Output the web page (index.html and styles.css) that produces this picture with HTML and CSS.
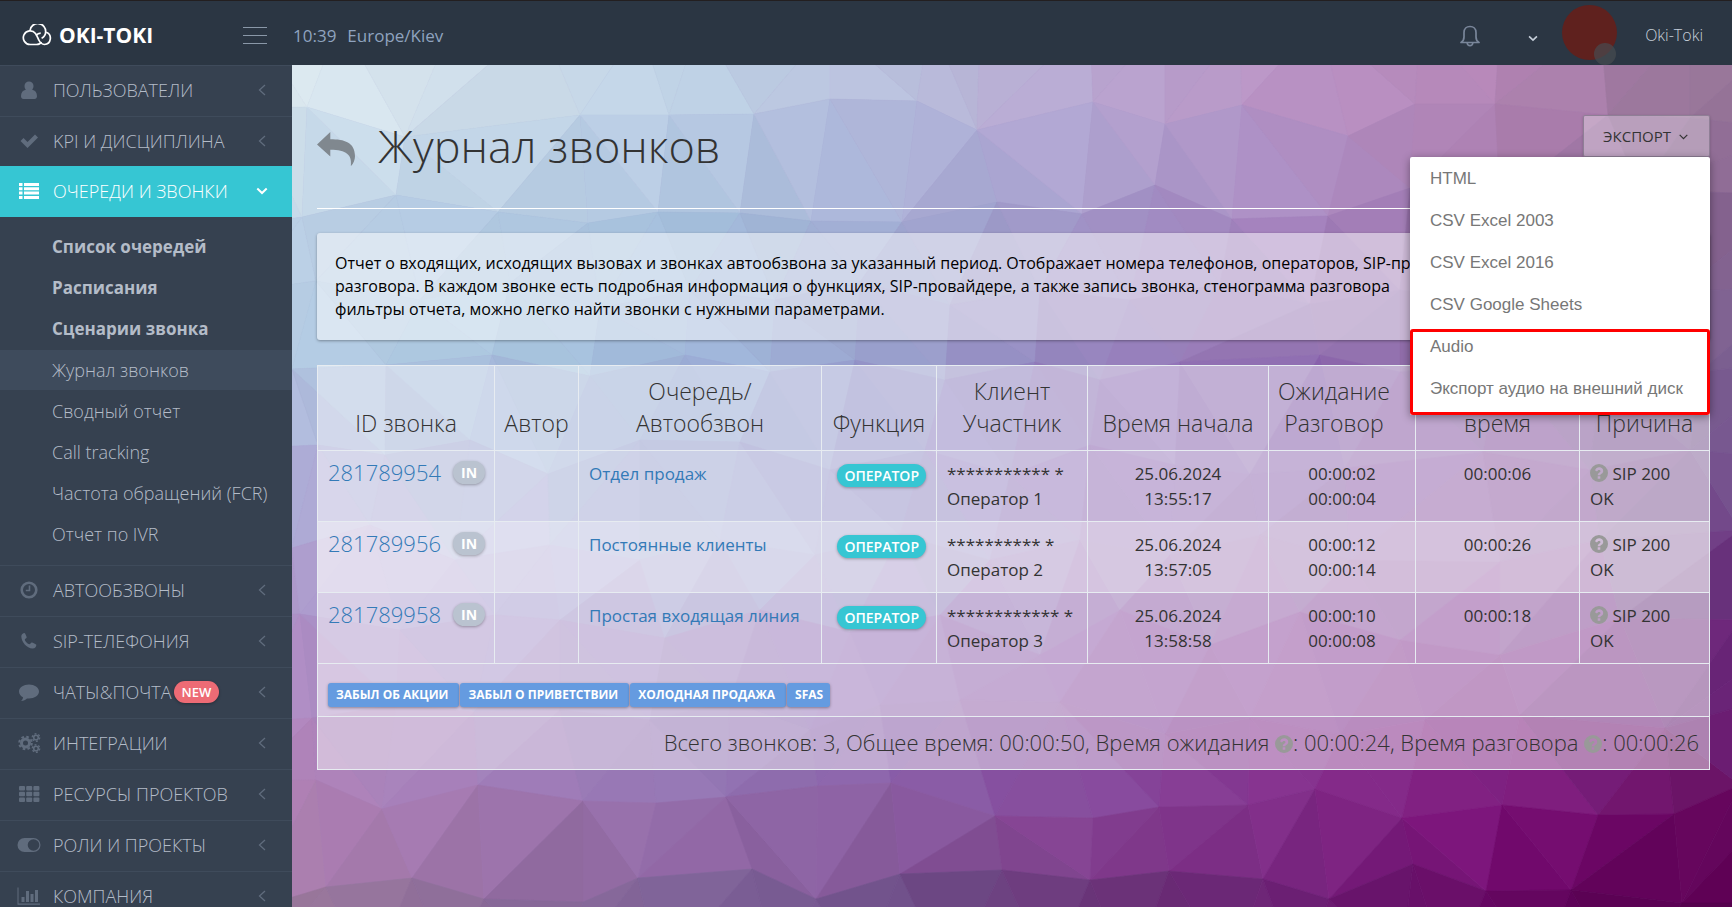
FILE: index.html
```html
<!DOCTYPE html>
<html lang="ru">
<head>
<meta charset="utf-8">
<title>Журнал звонков</title>
<link rel="stylesheet" href="styles.css">
</head>
<body>
<svg class="defs" aria-hidden="true">
  <symbol id="chev-left" viewBox="0 0 8 12"><path d="M7 1 1.500 6 7 11" fill="none" stroke="currentColor" stroke-width="1.300"/></symbol>
  <symbol id="chev-down" viewBox="0 0 12 8"><path d="M1.300 1.500 6 6 10.700 1.500" fill="none" stroke="currentColor" stroke-width="2"/></symbol>
  <symbol id="question" viewBox="0 0 18 18"><path fill-rule="evenodd" fill="currentColor" d="M9 0a9 9 0 1 1 0 18A9 9 0 0 1 9 0ZM7.700 12.300v2.500h2.600v-2.500ZM5 6.300l2 1.200C7.500 6.500 8 5.900 9 5.900c.9 0 1.500.5 1.500 1.200 0 .8-.5 1.100-1.300 1.600-.9.500-1.500 1.200-1.500 2.500h2.500c0-.6.400-.9 1.200-1.400 1-.6 1.800-1.500 1.800-2.900C13.200 4.600 11.400 3.300 9.200 3.300 7.200 3.300 5.900 4.300 5 6.300Z"/></symbol>
</svg>

<header class="topbar">
  <a class="brand" href="#">
    <svg class="brand-mark" viewBox="0 0 30 22" aria-hidden="true" fill="none" stroke="#fff" stroke-width="1.700">
      <path d="M8 20.500a6.800 6.800 0 1 1 5.500-11c1.600 2.200 2.200 4.300 3.300 6.500 1.200 2.600 3 4.300 5.700 4.500a6.300 6.300 0 0 0 1.700-12.200"/>
      <path d="M8 6.500a7.800 7.800 0 0 1 15.600 1.700c0 2.800-1.700 4.700-4 6.200M8 20.500h6.500c2.300 0 4-1 5-2.500M14 11.500c1.500-1.700 3-2.300 4.700-2.300"/>
    </svg>
    <span>OKI-TOKI</span>
  </a>
  <button class="burger" type="button" aria-label="Меню"><i></i><i></i><i></i></button>
  <div class="clock"><span>10:39</span><span>Europe/Kiev</span></div>
  <div class="top-right">
    <button class="icon-btn bell" type="button" aria-label="Уведомления">
      <svg width="20" height="22" viewBox="0 0 20 22" fill="none" stroke="currentColor" stroke-width="1.700"><path d="M1 17.500c2-1.200 3-3 3-5.500V7.500C4 4 6.500 1.500 10 1.500s6 2.500 6 6V12c0 2.500 1 4.300 3 5.500Z" stroke-linejoin="round"/><path d="M7.200 18c.2 1.700 1.300 2.700 2.800 2.700s2.600-1 2.800-2.700"/></svg>
    </button>
    <button class="icon-btn more" type="button" aria-label="Ещё"><svg width="10" height="7"><use href="#chev-down"/></svg></button>
    <span class="avatar"><span class="status"></span></span>
    <a class="user" href="#">Oki-Toki</a>
  </div>
</header>

<div class="shell">
  <nav class="sidebar">
    <a class="item" href="#"><svg class="ico" viewBox="0 0 24 20"><path d="M12 1.500a4.500 4.500 0 0 1 4.500 4.600c0 1.400-.5 2.700-1.300 3.600 3 .5 4.800 2.700 4.800 6.500 0 1.500-1 2.800-2.500 2.800h-11C5 19 4 17.700 4 16.200c0-3.800 1.800-6 4.800-6.500A5 5 0 0 1 7.500 6.100 4.500 4.500 0 0 1 12 1.500Z"/></svg><span>ПОЛЬЗОВАТЕЛИ</span><svg class="arrow"><use href="#chev-left"/></svg></a>
    <a class="item" href="#"><svg class="ico" viewBox="0 0 24 20"><path d="m3.500 10 3-3 4 4 7.500-7.500 3 3L10.500 17Z"/></svg><span>KPI И ДИСЦИПЛИНА</span><svg class="arrow"><use href="#chev-left"/></svg></a>
    <a class="item active" href="#"><svg class="ico" viewBox="0 0 24 20"><path d="M2 2h3.500v3H2Zm5 0h15v3H7ZM2 6.300h3.500v3H2Zm5 0h15v3H7ZM2 10.600h3.500v3H2Zm5 0h15v3H7ZM2 15h3.500v3H2Zm5 0h15v3H7Z"/></svg><span>ОЧЕРЕДИ И ЗВОНКИ</span><svg class="arrow-down"><use href="#chev-down"/></svg></a>
    <div class="submenu">
      <a class="strong" href="#">Список очередей</a>
      <a class="strong" href="#">Расписания</a>
      <a class="strong" href="#">Сценарии звонка</a>
      <a class="current" href="#">Журнал звонков</a>
      <a href="#">Сводный отчет</a>
      <a href="#">Call tracking</a>
      <a href="#">Частота обращений (FCR)</a>
      <a href="#">Отчет по IVR</a>
    </div>
    <a class="item" href="#"><svg class="ico" viewBox="0 0 24 20"><circle cx="12" cy="10" r="7.300" fill="none" stroke="currentColor" stroke-width="2.600"/><path d="M11.700 5.500h1.600v5.700H8.800V9.700h2.900Z"/></svg><span>АВТООБЗВОНЫ</span><svg class="arrow"><use href="#chev-left"/></svg></a>
    <a class="item" href="#"><svg class="ico" viewBox="0 0 24 20"><path d="M4.300 5.200c0-1.700 1.700-3.200 3.200-3.200.7 0 2.200 3.700 2.200 4.300 0 .9-1.900 1.600-1.900 2.500 0 1.200 3.300 4.500 4.500 4.500.9 0 1.600-1.900 2.500-1.900.6 0 4.300 1.700 4.500 2.300.2 1.500-1 3.800-3.800 3.800C9.800 17.500 4.300 10.500 4.300 5.200Z"/></svg><span>SIP-ТЕЛЕФОНИЯ</span><svg class="arrow"><use href="#chev-left"/></svg></a>
    <a class="item" href="#"><svg class="ico" viewBox="0 0 24 20"><path d="M12 2.500c5.500 0 10 3 10 7s-4.500 7-10 7l-2-.1c-1.500 1.500-3.300 2.300-5.800 2.600C5.300 17.800 6 16.700 6 15.300 3.500 14 2 12 2 9.500c0-4 4.500-7 10-7Z"/></svg><span>ЧАТЫ&amp;ПОЧТА</span><b class="new">NEW</b><svg class="arrow"><use href="#chev-left"/></svg></a>
    <a class="item" href="#"><svg class="ico" viewBox="0 0 24 20" fill="none" stroke="currentColor"><circle cx="8.500" cy="10" r="4" stroke-width="3"/><circle cx="8.500" cy="10" r="6.300" stroke-width="2" stroke-dasharray="2.600 2.350"/><circle cx="19" cy="4.500" r="2.300" stroke-width="1.600"/><circle cx="19" cy="4.500" r="3.700" stroke-width="1.400" stroke-dasharray="1.900 1.970"/><circle cx="19" cy="15.500" r="2.300" stroke-width="1.600"/><circle cx="19" cy="15.500" r="3.700" stroke-width="1.400" stroke-dasharray="1.900 1.970"/></svg><span>ИНТЕГРАЦИИ</span><svg class="arrow"><use href="#chev-left"/></svg></a>
    <a class="item" href="#"><svg class="ico" viewBox="0 0 24 20"><g id="cells"><rect x="2" y="2" width="6" height="4.500" rx="1"/><rect x="9.200" y="2" width="6" height="4.500" rx="1"/><rect x="16.400" y="2" width="6" height="4.500" rx="1"/></g><use href="#cells" y="5.700"/><use href="#cells" y="11.400"/></svg><span>РЕСУРСЫ ПРОЕКТОВ</span><svg class="arrow"><use href="#chev-left"/></svg></a>
    <a class="item" href="#"><svg class="ico" viewBox="0 0 24 20"><path fill-rule="evenodd" d="M7.500 3h9a7 7 0 0 1 0 14h-9a7 7 0 0 1 0-14Zm9 1.200a5.800 5.800 0 1 0 0 11.600 5.800 5.800 0 0 0 0-11.600Z"/></svg><span>РОЛИ И ПРОЕКТЫ</span><svg class="arrow"><use href="#chev-left"/></svg></a>
    <a class="item" href="#"><svg class="ico" viewBox="0 0 24 20"><path d="M.5 1.500h1v16H23v1.200H.5ZM4.500 11h3v5h-3Zm4.500-6h3v11H9Zm4.500 3h3v8h-3ZM18 4h3v12h-3Z"/></svg><span>КОМПАНИЯ</span><svg class="arrow"><use href="#chev-left"/></svg></a>
  </nav>

  <main class="page">
    <svg class="facets" id="facets" viewBox="0 0 1440 842" preserveAspectRatio="xMidYMid slice" aria-hidden="true"></svg>
    <div class="content">
      <div class="page-head">
        <a class="back" href="#" aria-label="Назад"><svg width="38" height="34" viewBox="0 0 38 34"><path fill="currentColor" d="M0 12.500 13.300 0v7.300c14 0 24.700 3 24.700 17 0 3.200-1.500 7.500-4 9.700-.3 0-.2-.4-.1-.8C35 23 29.500 18 13.300 17.800V24.500Z"/></svg></a>
        <h1>Журнал звонков</h1>
        <div class="export">
          <button class="export-btn" type="button">ЭКСПОРТ <svg width="9" height="6" viewBox="0 0 9 6"><path d="m.7.800 3.800 3.800L8.300.8" fill="none" stroke="currentColor" stroke-width="1.200"/></svg></button>
          <ul class="menu">
            <li><a href="#">HTML</a></li>
            <li><a href="#">CSV Excel 2003</a></li>
            <li><a href="#">CSV Excel 2016</a></li>
            <li><a href="#">CSV Google Sheets</a></li>
            <li><a href="#">Audio</a></li>
            <li><a href="#">Экспорт аудио на внешний диск</a></li>
          </ul>
        </div>
      </div>

      <p class="note">Отчет о входящих, исходящих вызовах и звонках автообзвона за указанный период. Отображает номера телефонов, операторов, SIP-провайдера,<br>разговора. В каждом звонке есть подробная информация о функциях, SIP-провайдере, а также запись звонка, стенограмма разговора<br>фильтры отчета, можно легко найти звонки с нужными параметрами.</p>

      <table class="calls">
        <colgroup><col class="c-id"><col class="c-author"><col class="c-queue"><col class="c-func"><col class="c-client"><col class="c-start"><col class="c-wait"><col class="c-total"><col class="c-reason"></colgroup>
        <thead>
          <tr><th>ID звонка</th><th>Автор</th><th>Очередь/<br>Автообзвон</th><th>Функция</th><th>Клиент<br>Участник</th><th>Время начала</th><th class="left">Ожидание<br>Разговор</th><th>Общее<br>время</th><th>Причина</th></tr>
        </thead>
        <tbody>
          <tr><td class="id-cell"><a class="id" href="#">281789954</a><b class="in">IN</b></td><td></td><td><a href="#">Отдел продаж</a></td><td class="right"><b class="op">ОПЕРАТОР</b></td><td>*********** *<br>Оператор 1</td><td class="mid">25.06.2024<br>13:55:17</td><td class="mid">00:00:02<br>00:00:04</td><td class="mid">00:00:06</td><td><svg class="q"><use href="#question"/></svg> SIP 200<br>OK</td></tr>
          <tr class="even"><td class="id-cell"><a class="id" href="#">281789956</a><b class="in">IN</b></td><td></td><td><a href="#">Постоянные клиенты</a></td><td class="right"><b class="op">ОПЕРАТОР</b></td><td>********** *<br>Оператор 2</td><td class="mid">25.06.2024<br>13:57:05</td><td class="mid">00:00:12<br>00:00:14</td><td class="mid">00:00:26</td><td><svg class="q"><use href="#question"/></svg> SIP 200<br>OK</td></tr>
          <tr><td class="id-cell"><a class="id" href="#">281789958</a><b class="in">IN</b></td><td></td><td><a href="#">Простая входящая линия</a></td><td class="right"><b class="op">ОПЕРАТОР</b></td><td>************ *<br>Оператор 3</td><td class="mid">25.06.2024<br>13:58:58</td><td class="mid">00:00:10<br>00:00:08</td><td class="mid">00:00:18</td><td><svg class="q"><use href="#question"/></svg> SIP 200<br>OK</td></tr>
          <tr class="tags"><td colspan="9"><div class="tag-row"><button type="button">ЗАБЫЛ ОБ АКЦИИ</button><button type="button">ЗАБЫЛ О ПРИВЕТСТВИИ</button><button type="button">ХОЛОДНАЯ ПРОДАЖА</button><button type="button">SFAS</button></div></td></tr>
        </tbody>
        <tfoot>
          <tr><td colspan="9">Всего звонков: 3, Общее время: 00:00:50, Время ожидания <svg class="q"><use href="#question"/></svg>: 00:00:24, Время разговора <svg class="q"><use href="#question"/></svg>: 00:00:26</td></tr>
        </tfoot>
      </table>
    </div>
  </main>
</div>
<script src="facets.js"></script>
</body>
</html>
```

FILE: styles.css
```css
*, *::after { box-sizing: border-box; }

body {
  margin: 0;
  height: 100vh;
  display: flex;
  flex-direction: column;
  overflow: hidden;
  font-family: "Open Sans", "Noto Sans", sans-serif;
  font-size: 17px;
  color: #333;
  background: #364150;
}

a { text-decoration: none; color: #337ab7; }
button { font: inherit; margin: 0; padding: 0; border: 0; background: none; cursor: pointer; }
.defs { position: absolute; width: 0; height: 0; }

/* Top bar */
.topbar {
  flex: none;
  height: 65px;
  display: flex;
  align-items: center;
  background: #2b3643;
  border-top: 1px solid #231f20;
  padding-top: 4px;
}
.brand {
  display: flex;
  align-items: center;
  gap: 7px;
  width: 243px;
  padding-left: 22px;
  color: #fff;
  font-size: 21px;
  font-weight: 700;
}
.brand-mark { width: 30px; height: 22px; }
.burger { width: 24px; height: 17px; display: flex; flex-direction: column; justify-content: space-between; }
.burger i { height: 1px; background: #8a98a8; }
.clock { display: flex; gap: 11px; margin-left: 26px; color: #8fa3bf; }
.top-right { margin-left: auto; display: flex; align-items: center; padding-right: 29px; }
.icon-btn { display: flex; }
.bell { color: #79869a; margin-right: 48px; padding-top: 2px; }
.more { color: #c6cfda; margin-right: 24px; padding-top: 7px; }
.avatar { position: relative; width: 55px; height: 55px; border-radius: 50%; background: #5f211e; margin: -5px 28px 0 0; }
.status { position: absolute; right: 1px; bottom: -5px; width: 22px; height: 22px; border-radius: 50%; background: rgba(71, 76, 80, .7); }
.user { color: #c6cfda; font-size: 16px; font-weight: 300; }

.shell { flex: 1; min-height: 0; display: flex; }

/* Sidebar */
.sidebar { flex: none; width: 292px; overflow: hidden; background: #364150; }
.item {
  display: flex;
  align-items: center;
  height: 51px;
  padding: 0 26px 2px 17px;
  border-top: 1px solid #3f4b5b;
  font-size: 18px;
  font-weight: 300;
  color: #b4bcc8;
}
.ico { width: 24px; height: 20px; margin-right: 12px; color: #606c7d; fill: currentColor; }
.ico[fill="none"] { fill: none; }
.arrow { width: 8px; height: 12px; margin-left: auto; color: #606c7d; }
.arrow-down { width: 12px; height: 8px; margin: 0 -2px 0 auto; color: #fff; }
.item.active { margin-top: -1px; background: #36c6d3; border-color: #36c6d3; color: #fff; }
.item.active .ico { color: #fff; }
.new {
  margin-left: 2px;
  padding: 0 8px;
  border-radius: 11px;
  background: #ed6b75;
  color: #fff;
  font-size: 13px;
  font-weight: 600;
  line-height: 22px;
  box-shadow: 0 1px 3px rgba(0, 0, 0, .3);
}
.submenu { display: flex; flex-direction: column; gap: 1px; padding: 10px 0 11px; }
.submenu a { padding-left: 52px; line-height: 40px; font-size: 18px; font-weight: 300; color: #b4bcc8; }
.submenu .strong { font-size: 17px; font-weight: 700; }
.submenu .current { background: #3e4b5c; }

/* Page */
.page { position: relative; flex: 1; min-width: 0; background: #a08cc0; overflow: hidden; }
.facets { position: absolute; width: 100%; height: 100%; }
.content { position: relative; padding: 50px 22px 0 25px; }
.page-head { display: flex; align-items: flex-start; height: 94px; border-bottom: 1px solid #fff; margin-bottom: 24px; }
.back { margin: 17px 23px 0 0; color: #80888f; }
.back svg { display: block; }
h1 { margin: 0; font-size: 45px; line-height: 62px; font-weight: 300; }

.export { position: relative; margin-left: auto; z-index: 2; }
.export-btn {
  width: 127px;
  height: 42px;
  border: 1px solid #8f7f96;
  border-radius: 2px;
  background: rgba(255, 255, 255, .33);
  box-shadow: 0 1px 3px rgba(0, 0, 0, .2);
  font-size: 15px;
  font-weight: 500;
  color: #333;
}
.export-btn svg { margin: 0 2px 2px 4px; }
.menu {
  position: absolute;
  top: 42px;
  right: 0;
  width: 300px;
  margin: 0;
  padding: 1px 0 5px;
  list-style: none;
  background: #fff;
  border-radius: 2px;
  box-shadow: 0 2px 8px rgba(0, 0, 0, .4);
}
.menu a { display: block; padding-left: 20px; line-height: 42px; white-space: nowrap; font-family: "Liberation Sans", sans-serif; color: #777; }
.menu::after { content: ""; position: absolute; left: 0; right: 0; bottom: 0; height: 86px; border: 3px solid #f00; border-radius: 3px; pointer-events: none; }

.note {
  margin: 0 0 25px;
  padding: 19px 18px;
  background: rgba(255, 255, 255, .5);
  border-radius: 3px;
  box-shadow: 0 1px 3px rgba(0, 0, 0, .35);
  font-size: 16px;
  line-height: 23px;
  white-space: nowrap;
  color: #000;
}

/* Calls table */
.calls { width: 100%; table-layout: fixed; border-collapse: collapse; line-height: 25px; }
.calls th, .calls td { border: 1px solid #e7ecf1; padding: 10px; vertical-align: top; text-align: left; }
.calls th { vertical-align: bottom; text-align: center; padding: 9px 0 11px; font-size: 23px; line-height: 32px; font-weight: 300; }
.calls th.left { padding-right: 16px; }
.calls thead, .calls tfoot { background: rgba(255, 255, 255, .45); }
.calls tbody tr { background: rgba(255, 255, 255, .52); }
.calls tbody .even { background: rgba(255, 255, 255, .65); }
.calls td.mid { text-align: center; }
.calls td.right { text-align: right; }
.calls td.id-cell { padding-top: 7px; white-space: nowrap; }
.c-id { width: 177px; }
.c-author { width: 84px; }
.c-queue { width: 243px; }
.c-func { width: 115px; }
.c-client { width: 151px; }
.c-start { width: 181px; }
.c-wait { width: 147px; }
.c-total { width: 164px; }
.c-reason { width: 130px; }
.id { font-size: 22px; font-weight: 300; vertical-align: middle; }
.in, .op { display: inline-block; border-radius: 12px; color: #fff; font-size: 14px; font-weight: 600; line-height: 23px; box-shadow: 0 1px 3px rgba(0, 0, 0, .3); }
.in { margin-left: 12px; padding: 0 8px; background: #bac3d0; font-weight: 700; vertical-align: middle; }
.op { padding: 0 7px; background: #36c6d3; margin-top: 3px; }
.q { width: 18px; height: 18px; color: #999; vertical-align: -2px; }
.calls .tags td { padding: 19px 10px 9px; }
.tag-row { display: flex; gap: 1px; }
.tag-row button { padding: 0 11px 0 8px; border-radius: 3px; background: #659be0; box-shadow: 0 1px 3px rgba(0, 0, 0, .35); color: #fff; font-size: 12px; font-weight: 700; line-height: 24px; }
.tag-row button:last-child { padding-right: 7px; }
.calls tfoot td { padding: 9px 10px 11px; text-align: right; font-size: 22px; line-height: 32px; font-weight: 300; }
```

FILE: facets.js
```js
// Low-poly backdrop: rows of vertices joined into triangles and
// coloured from a coarse palette grid.
(function () {
  var svg = document.getElementById("facets");
  var OX = 292, OY = 65;

  var rows = [
    [[250,20],[340,20],[450,30],[540,20],[640,25],[700,20],[830,25],[930,20],[980,25],[1090,20],[1165,20],[1240,25],[1320,20],[1420,20],[1500,25],[1600,20],[1690,20],[1800,20]],
    [[250,108],[307,107],[405,137],[580,115],[669,115],[754,114],[830,99],[917,101],[977,130],[1093,102],[1165,124],[1242,105],[1348,136],[1415,104],[1495,104],[1608,115],[1690,118],[1800,130]],
    [[250,225],[302,217],[396,195],[498,212],[588,223],[658,212],[740,213],[811,221],[902,222],[997,202],[1082,214],[1155,185],[1232,219],[1328,216],[1410,188],[1500,200],[1640,190],[1800,195]],
    [[250,290],[316,281],[420,300],[510,283],[600,308],[690,290],[775,300],[860,282],[950,305],[1040,290],[1130,300],[1220,284],[1310,304],[1400,290],[1490,300],[1580,285],[1680,292],[1800,286]],
    [[250,372],[292,369],[386,365],[492,355],[590,376],[685,355],[770,372],[855,360],[945,380],[1035,362],[1100,380],[1180,362],[1320,355],[1400,372],[1500,360],[1600,375],[1700,372],[1800,360]],
    [[250,448],[318,445],[385,455],[470,440],[548,474],[640,440],[740,442],[830,470],[925,450],[1010,475],[1090,445],[1175,465],[1250,474],[1345,468],[1483,452],[1590,470],[1690,450],[1800,460]],
    [[250,545],[292,548],[370,525],[455,560],[550,545],[640,560],[720,540],[815,555],[900,535],[990,560],[1080,540],[1170,555],[1260,535],[1350,560],[1500,562],[1600,540],[1740,530],[1800,540]],
    [[250,616],[300,614],[400,630],[495,615],[560,620],[665,638],[760,610],[850,632],[940,615],[1040,655],[1120,610],[1210,645],[1300,612],[1400,640],[1500,655],[1620,618],[1740,620],[1800,630]],
    [[250,722],[312,718],[396,705],[474,712],[560,710],[650,720],[730,702],[810,730],[880,705],[960,700],[1060,702],[1165,734],[1250,718],[1340,735],[1425,720],[1520,715],[1665,728],[1800,690]],
    [[250,781],[316,780],[382,809],[478,785],[583,801],[656,803],[726,797],[818,786],[891,783],[995,816],[1093,818],[1159,807],[1248,805],[1315,789],[1402,818],[1502,805],[1598,815],[1674,814],[1740,785],[1800,780]],
    [[250,910],[326,887],[412,878],[484,899],[583,902],[638,878],[752,869],[816,899],[900,874],[1002,870],[1090,880],[1169,871],[1263,879],[1329,899],[1413,864],[1486,891],[1571,890],[1682,903],[1800,903]],
    [[250,980],[370,980],[450,970],[560,980],[660,975],[780,980],[860,975],[950,980],[1050,975],[1130,980],[1230,975],[1300,980],[1400,975],[1450,980],[1540,975],[1620,980],[1800,980]]
  ];

  var gridX = [300, 500, 700, 900, 1100, 1300, 1500, 1700];
  var gridY = [80, 165, 235, 350, 480, 560, 640, 720, 775, 845, 900];
  var palette = [
    "DCE9F0 CDDDEA BFD2E6 B9BEDC B9A6D0 BA93C4 B585B6 977598",
    "C9DCEA C0D4E6 B4C7E1 ABB2D8 AEA1CF AE8FC4 AC7DAF 8F6C95",
    "BCD0E6 B0C8E0 A4BEDB A0AAD1 A193C6 A582BC 9C74AC 85638F",
    "B4CCE3 A9C6DF 9FB6DA 989CCA 9580BC 9474B2 8864A2 7C6192",
    "ADACD6 A0ACD4 949ECC 8C86C3 8C66B2 845AAA 884C9D 74508C",
    "AF9FCE A49CD0 949CCC 8A84BE 8A66AC 86589F 844C98 6A3A80",
    "AE94C8 A08CC6 9478B8 8C63B0 8446A0 843A96 802E90 6A2878",
    "B088C0 A688C0 9478B4 895DAA 86449B 82328C 7A207E 6A2076",
    "B083B8 A07AB6 9477B4 8A62A8 864A9C 87308E 821F82 6C1668",
    "B080B4 9C72A8 9268A6 885A9C 823C8E 7C2883 7A0E76 620058",
    "9A789C 8A6A98 7E6298 70508A 6A3478 6C2074 660662 54004C"
  ].map(function (line) {
    return line.split(" ").map(function (hex) {
      return [0, 2, 4].map(function (i) { return parseInt(hex.substr(i, 2), 16); });
    });
  });

  function locate(grid, v) {
    var last = grid.length - 1;
    if (v <= grid[0]) return [0, 0];
    if (v >= grid[last]) return [last - 1, 1];
    var i = 0;
    while (v > grid[i + 1]) i++;
    return [i, (v - grid[i]) / (grid[i + 1] - grid[i])];
  }

  function colorAt(x, y, shift) {
    var cx = locate(gridX, x), cy = locate(gridY, y);
    var out = [0, 1, 2].map(function (k) {
      var a = palette[cy[0]][cx[0]][k], b = palette[cy[0]][cx[0] + 1][k];
      var c = palette[cy[0] + 1][cx[0]][k], d = palette[cy[0] + 1][cx[0] + 1][k];
      var top = a + (b - a) * cx[1], bottom = c + (d - c) * cx[1];
      return Math.max(0, Math.round(top + (bottom - top) * cy[1] + shift));
    });
    return "rgb(" + out.join(",") + ")";
  }

  var count = 0;
  function triangle(a, b, c) {
    var x = (a[0] + b[0] + c[0]) / 3, y = (a[1] + b[1] + c[1]) / 3;
    var shift = (count * 7) % 5 - 2;
    count++;
    var fill = colorAt(x, y, shift);
    var p = document.createElementNS("http://www.w3.org/2000/svg", "polygon");
    p.setAttribute("points", [a, b, c].map(function (v) { return (v[0] - OX) + "," + (v[1] - OY); }).join(" "));
    p.setAttribute("fill", fill);
    p.setAttribute("stroke", fill);
    p.setAttribute("stroke-width", "0.6");
    svg.appendChild(p);
  }

  for (var r = 0; r < rows.length - 1; r++) {
    var up = rows[r], low = rows[r + 1], i = 0, j = 0;
    while (i < up.length - 1 || j < low.length - 1) {
      var stepUp = j === low.length - 1 || (i < up.length - 1 && up[i + 1][0] <= low[j + 1][0]);
      if (stepUp) { triangle(up[i], up[i + 1], low[j]); i++; }
      else { triangle(up[i], low[j], low[j + 1]); j++; }
    }
  }
})();
```
